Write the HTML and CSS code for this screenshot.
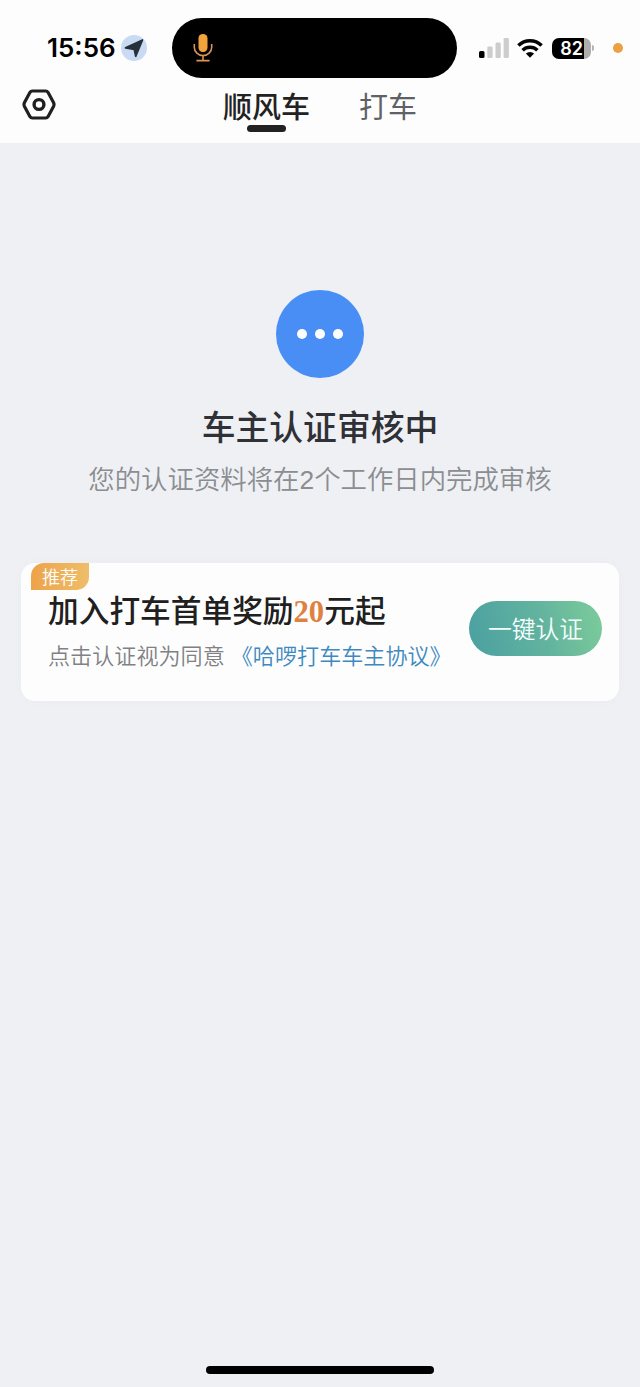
FILE: index.html
```html
<!DOCTYPE html>
<html lang="zh-CN">
<head>
<meta charset="utf-8">
<title>车主认证</title>
<link rel="stylesheet" href="styles.css">
</head>
<body>
<div class="screen">
  <header class="header">
    <div class="status-bar">
      <div class="clock">15:56</div>
      <svg class="location" viewBox="0 0 26 26"><circle cx="13" cy="13" r="13" fill="#c9daf3"/><path d="M4.500 12.800 21.500 5 14.700 21.300 13.200 14.300z" fill="#27313b" stroke="#27313b" stroke-width="1.700" stroke-linejoin="round"/></svg>
      <div class="island">
        <svg class="mic" viewBox="0 0 20 29"><rect x="5.5" y="1" width="9" height="18" rx="4.2" fill="#f2a33c"/><path d="M1.300 11v3.200a8.700 8.400 0 0 0 17.400 0V11M10 22.600v4.700M3.400 27.600h13.200" fill="none" stroke="#dc9450" stroke-width="1.600"/></svg>
      </div>
      <svg class="signal" viewBox="0 0 30 20"><rect y="13" width="5.5" height="7" rx="1.5"/><g fill="#cdcdcd"><rect x="8.3" y="8.5" width="5.3" height="11.5" rx="1.3"/><rect x="16.5" y="4.5" width="5.3" height="15.5" rx="1.3"/><rect x="24.6" y="0" width="5.3" height="20" rx="1.3"/></g></svg>
      <svg class="wifi" viewBox="0 0 26 19"><g fill="none" stroke="#050505" stroke-width="3.5"><path d="M1.400 6.500a16.600 16.600 0 0 1 23.200 0"/><path d="M5.600 11.200a10.700 10.700 0 0 1 14.800 0"/></g><path d="m13 18.700-4.100-4.100a6 6 0 0 1 8.200 0z"/></svg>
      <div class="battery">82</div>
      <div class="battery-tip"></div>
      <div class="privacy-dot"></div>
    </div>
    <nav class="nav">
      <svg class="settings" viewBox="0 0 34 31"><path d="M10.300 2h13.400q1.500 0 2.300 1.300l5.500 10.200q1 2 0 4L26 27.700Q25.200 29 23.700 29H10.300Q8.800 29 8 27.700L2.500 17.500q-1-2 0-4L8 3.300Q8.800 2 10.300 2z" fill="none" stroke="#202020" stroke-width="3.2"/><circle cx="17" cy="15.500" r="4.900" fill="none" stroke="#202020" stroke-width="3.400"/></svg>
      <div class="tab active">顺风车</div>
      <div class="tab">打车</div>
    </nav>
  </header>
  <main class="content">
    <div class="pending"><i></i><i></i><i></i></div>
    <h1 class="title">车主认证审核中</h1>
    <p class="subtitle">您的认证资料将在2个工作日内完成审核</p>
    <section class="card">
      <span class="badge">推荐</span>
      <div class="offer">
        <h2 class="offer-title">加入打车首单奖励<b class="amount">20</b>元起</h2>
        <p class="terms">点击认证视为同意<a class="link">《哈啰打车车主协议》</a></p>
      </div>
      <button class="verify">一键认证</button>
    </section>
  </main>
  <div class="home-bar"></div>
</div>
</body>
</html>
```
FILE: styles.css
```css
* { box-sizing: border-box; }
body {
  margin: 0;
  font-family: "Noto Sans CJK SC", sans-serif;
}
.screen {
  height: 1387px;
  display: flex;
  flex-direction: column;
  align-items: center;
  background: #eef0f4;
}
.header {
  width: 640px;
  height: 143px;
  padding-top: 18px;
  background: #fdfdfd;
}
.status-bar {
  height: 60px;
  display: flex;
  align-items: center;
  padding-left: 47px;
}
.clock {
  width: 74px;
  font: 600 26px/60px Inter, sans-serif;
}
.location { width: 26px; height: 26px; }
.island {
  width: 285px;
  height: 60px;
  margin-left: 25px;
  padding: 15px 0 0 21px;
  border-radius: 30px;
  background: #000;
}
.mic { display: block; width: 20px; height: 29px; }
.signal { width: 30px; height: 20px; margin-left: 22px; }
.wifi { width: 26px; height: 19px; margin-left: 8px; }
.battery {
  width: 39px;
  height: 21px;
  margin-left: 9px;
  border-radius: 7px;
  background: linear-gradient(90deg, #000 82%, #adadad 82%);
  color: #fff;
  font: 600 18px/21px Inter, sans-serif;
  text-align: center;
}
.battery-tip {
  width: 2px;
  height: 6px;
  margin-left: 1px;
  border-radius: 0 3px 3px 0;
  background: #b5b5b5;
}
.privacy-dot {
  width: 10px;
  height: 10px;
  margin-left: 19px;
  border-radius: 50%;
  background: #eba043;
}
.nav {
  height: 65px;
  display: flex;
  align-items: flex-start;
  padding-left: 22px;
}
.settings { width: 34px; height: 31px; margin-top: 11px; }
.tab {
  margin-left: 50px;
  padding-top: 8px;
  font-size: 29px;
  line-height: 39px;
  color: #606164;
}
.tab.active {
  display: flex;
  flex-direction: column;
  align-items: center;
  margin-left: 167px;
  margin-right: -1px;
  font-weight: 500;
  color: #222;
}
.tab.active::after {
  content: "";
  width: 39px;
  height: 7px;
  border-radius: 4px;
  background: #222;
}
.content {
  flex: 1;
  display: flex;
  flex-direction: column;
  align-items: center;
  padding-top: 147px;
}
.pending {
  width: 88px;
  height: 88px;
  display: flex;
  align-items: center;
  justify-content: center;
  gap: 8px;
  border-radius: 50%;
  background: #488ef5;
}
.pending i {
  width: 10px;
  height: 10px;
  border-radius: 50%;
  background: #fff;
}
.title {
  margin: 23px 0 0;
  font-size: 33.8px;
  font-weight: 500;
  line-height: 50px;
  color: #303136;
}
.subtitle {
  margin: 9px 0 0;
  font-family: "Liberation Sans", "Noto Sans CJK SC", sans-serif;
  font-size: 26.4px;
  font-weight: 350;
  line-height: 40px;
  color: #8b8d91;
}
.card {
  position: relative;
  width: 598px;
  height: 138px;
  margin-top: 63px;
  padding: 0 17px 0 27px;
  display: flex;
  justify-content: space-between;
  border-radius: 14px;
  background: #fdfdfd;
  box-shadow: 0 0 12px rgba(70, 80, 100, 0.025);
}
.badge {
  position: absolute;
  left: 10px;
  top: 0;
  width: 58px;
  height: 27px;
  border-radius: 13px 0 13px 0;
  background: linear-gradient(90deg, #eda34a, #efbd69);
  color: #fff;
  font-size: 18px;
  font-weight: 350;
  line-height: 27px;
  text-align: center;
}
.offer { padding-top: 23px; white-space: nowrap; }
.offer-title {
  margin: 0;
  font-size: 30.7px;
  font-weight: 500;
  line-height: 46px;
  color: #202020;
}
.amount {
  font-family: "Liberation Serif", serif;
  font-weight: 700;
  color: #df8141;
}
.terms {
  margin: 2px 0 0;
  font-size: 22.1px;
  font-weight: 350;
  line-height: 34px;
  color: #7f8185;
}
.link { margin-left: 6px; color: #4089c0; }
.verify {
  width: 133px;
  height: 55px;
  margin: 38px 0 0;
  padding: 0 0 2px;
  border: 0;
  border-radius: 28px;
  background: linear-gradient(75deg, #4aa0a2, #62b39e 55%, #7dcc9b);
  color: #f5fffc;
  font: 350 23.8px/53px "Noto Sans CJK SC", sans-serif;
}
.home-bar {
  width: 228px;
  height: 8px;
  margin-bottom: 13px;
  border-radius: 4px;
  background: #000;
}
```
